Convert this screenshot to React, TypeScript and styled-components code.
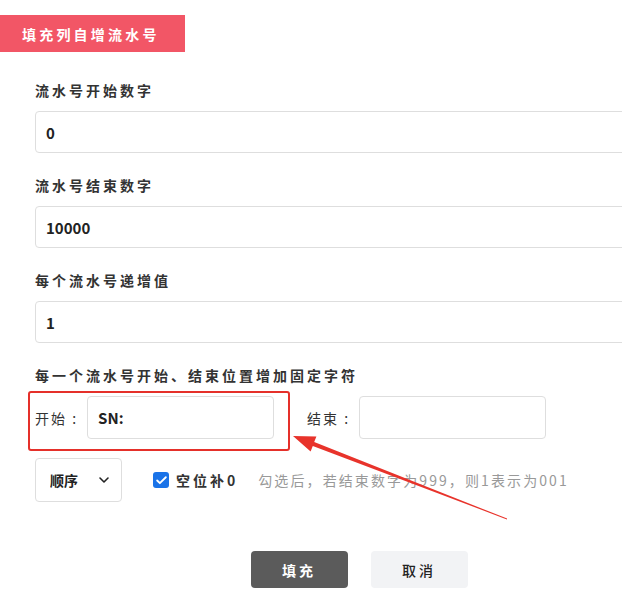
import React from "react";
import styled, { createGlobalStyle } from "styled-components";
import { Check, ChevronDown } from "lucide-react";

const GlobalStyle = createGlobalStyle`
  html, body {
    margin: 0;
    padding: 0;
    background: #fff;
    overflow: hidden;
  }
  body {
    font-family: "Noto Sans CJK SC", "Noto Sans", sans-serif;
    color: #333;
  }
`;

const fields = [
  { label: "流水号开始数字", value: "0" },
  { label: "流水号结束数字", value: "10000" },
  { label: "每个流水号递增值", value: "1" },
];

function App() {
  return (
    <Viewport>
      <GlobalStyle />
      <Page>
        <Tag>填充列自增流水号</Tag>
        <Form>
          {fields.map(f => (
            <Field key={f.label}>
              <Label>{f.label}</Label>
              <TextInput defaultValue={f.value} />
            </Field>
          ))}
          <Label>每一个流水号开始、结束位置增加固定字符</Label>
          <AffixRow>
            <AffixGroup>
              <AffixLabel>开始 :</AffixLabel>
              <AffixInput defaultValue="SN:" />
            </AffixGroup>
            <AffixGroup>
              <AffixLabel>结束 :</AffixLabel>
              <AffixInput defaultValue="" />
            </AffixGroup>
          </AffixRow>
          <OptionRow>
            <SelectWrap>
              <Select defaultValue="asc">
                <option value="asc">顺序</option>
                <option value="desc">倒序</option>
              </Select>
              <SelectArrow size={16} strokeWidth={2.4} />
            </SelectWrap>
            <CheckLabel>
              <CheckBox>
                <Check size={13} strokeWidth={3.4} color="#fff" />
              </CheckBox>
              空位补0
            </CheckLabel>
            <Hint>勾选后，若结束数字为999，则1表示为001</Hint>
          </OptionRow>
        </Form>
        <Actions>
          <Button $primary>填充</Button>
          <Button>取消</Button>
        </Actions>
        <Highlight />
        <Arrow viewBox="0 0 718 611" width={718} height={611}>
          <polygon
            points="293,436 316.4,436.5 314.2,442.1 507.1,518.6 506.9,519.4 312.8,445.9 310.6,451.5"
            fill="#e8332b"
          />
        </Arrow>
      </Page>
    </Viewport>
  );
}

export default App;

const Viewport = styled.div`
  width: 622px;
  height: 611px;
  overflow: hidden;
`;

const Page = styled.div`
  position: relative;
  width: 718px;
  height: 611px;
  padding-top: 15px;
  box-sizing: border-box;
`;

const Tag = styled.div`
  display: flex;
  align-items: center;
  width: 185px;
  height: 37px;
  box-sizing: border-box;
  padding-left: 22px;
  background: #f25666;
  color: #fff;
  font-size: 14px;
  font-weight: 700;
  letter-spacing: 3.2px;
`;

const Form = styled.div`
  padding: 28px 35px 0;
`;

const Field = styled.div`
  margin-bottom: 22px;
`;

const Label = styled.div`
  font-size: 14px;
  line-height: 20px;
  font-weight: 700;
  letter-spacing: 3px;
  color: #333;
  margin-bottom: 11px;
`;

const TextInput = styled.input`
  display: block;
  width: 100%;
  height: 42px;
  box-sizing: border-box;
  border: 1px solid #dedede;
  border-radius: 4px;
  padding: 0 10px;
  font-family: "Noto Sans CJK SC", "Noto Sans", sans-serif;
  font-size: 15px;
  font-weight: 600;
  color: #222;
  outline: none;
`;

const AffixRow = styled.div`
  display: flex;
  gap: 33px;
  margin-top: 1px;
`;

const AffixGroup = styled.div`
  display: flex;
  align-items: center;
  gap: 9px;
`;

const AffixLabel = styled.span`
  font-size: 14px;
  letter-spacing: 2px;
  color: #333;
  white-space: nowrap;
`;

const AffixInput = styled(TextInput)`
  width: 187px;
  height: 43px;
`;

const OptionRow = styled.div`
  display: flex;
  align-items: center;
  margin-top: 19px;
`;

const SelectWrap = styled.div`
  position: relative;
  width: 87px;
  height: 44px;
`;

const Select = styled.select`
  appearance: none;
  width: 100%;
  height: 100%;
  border: 1px solid #dedede;
  border-radius: 4px;
  background: #fff;
  padding: 0 0 0 14px;
  font-family: "Noto Sans CJK SC", "Noto Sans", sans-serif;
  font-size: 14px;
  font-weight: 700;
  color: #222;
  outline: none;
`;

const SelectArrow = styled(ChevronDown)`
  position: absolute;
  right: 10px;
  top: 14px;
  color: #222;
  pointer-events: none;
`;

const CheckLabel = styled.label`
  display: flex;
  align-items: center;
  gap: 7px;
  margin-left: 31px;
  font-size: 14px;
  font-weight: 700;
  letter-spacing: 3px;
  color: #333;
`;

const CheckBox = styled.span`
  display: inline-flex;
  align-items: center;
  justify-content: center;
  width: 16px;
  height: 16px;
  border-radius: 3px;
  background: #1a73e8;
`;

const Hint = styled.span`
  margin-left: 20px;
  font-size: 14px;
  letter-spacing: 2.1px;
  color: #999;
  white-space: nowrap;
`;

const Actions = styled.div`
  display: flex;
  justify-content: center;
  gap: 23px;
  margin-top: 49px;
`;

const Button = styled.button<{ $primary?: boolean }>`
  width: 97px;
  height: 37px;
  border: none;
  border-radius: 4px;
  background: ${p => (p.$primary ? "#5b5b5b" : "#f2f3f5")};
  color: ${p => (p.$primary ? "#fff" : "#222")};
  font-family: "Noto Sans CJK SC", "Noto Sans", sans-serif;
  font-size: 14px;
  font-weight: ${p => (p.$primary ? 700 : 500)};
  letter-spacing: 3px;
  cursor: pointer;
`;

const Highlight = styled.div`
  position: absolute;
  left: 28px;
  top: 391px;
  width: 262px;
  height: 60px;
  box-sizing: border-box;
  border: 2px solid #e5302a;
  border-radius: 3px;
  pointer-events: none;
`;

const Arrow = styled.svg`
  position: absolute;
  left: 0;
  top: 0;
  pointer-events: none;
`;
